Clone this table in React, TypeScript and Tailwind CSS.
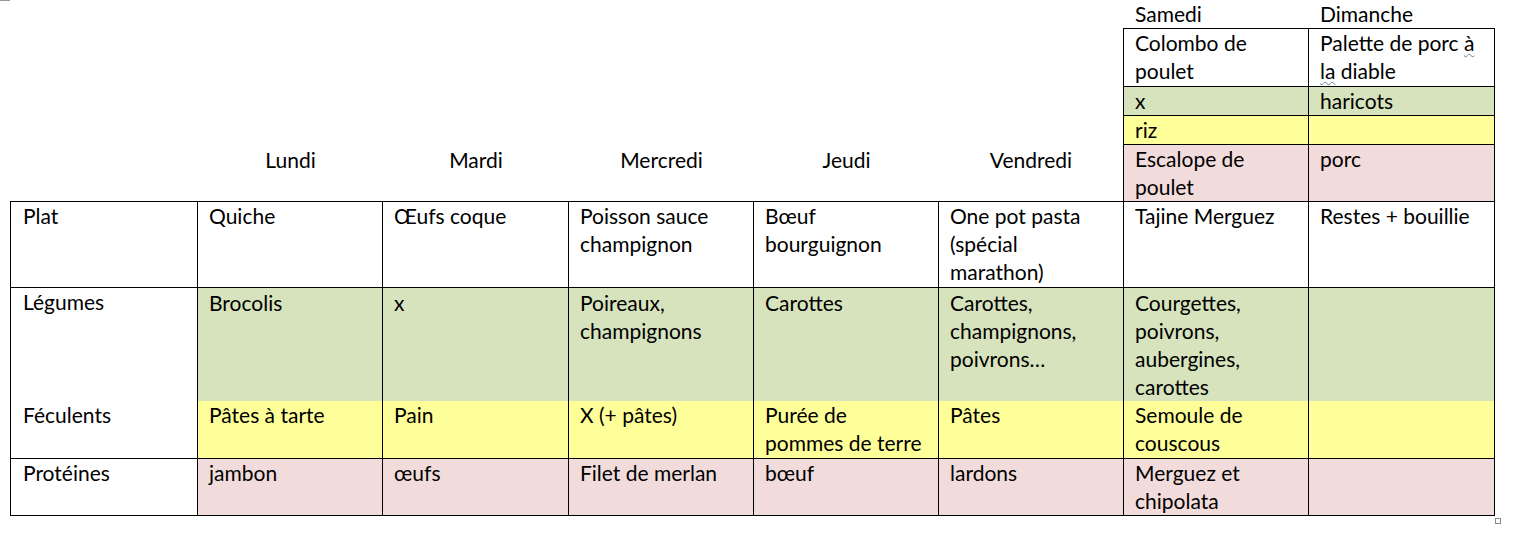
import React from "react";

type Tone = "white" | "green" | "yellow" | "pink";

const bg: Record<Tone, string> = {
  white: "bg-white",
  green: "bg-[#d6e3bc]",
  yellow: "bg-[#ffff99]",
  pink: "bg-[#f2dbdb]",
};

const days = ["Lundi", "Mardi", "Mercredi", "Jeudi", "Vendredi"];

// each cell is a list of lines, wrapped as in the original document
const rows: { label: string; tone: Tone; height: string; cells: string[][] }[] = [
  {
    label: "Plat",
    tone: "white",
    height: "h-[86px]",
    cells: [
      ["Quiche"],
      ["Œufs coque"],
      ["Poisson sauce", "champignon"],
      ["Bœuf", "bourguignon"],
      ["One pot pasta", "(spécial", "marathon)"],
      ["Tajine Merguez"],
      ["Restes + bouillie"],
    ],
  },
  {
    label: "Légumes",
    tone: "green",
    height: "h-[113px]",
    cells: [
      ["Brocolis"],
      ["x"],
      ["Poireaux,", "champignons"],
      ["Carottes"],
      ["Carottes,", "champignons,", "poivrons…"],
      ["Courgettes,", "poivrons,", "aubergines,", "carottes"],
      [],
    ],
  },
  {
    label: "Féculents",
    tone: "yellow",
    height: "h-[58px]",
    cells: [
      ["Pâtes à tarte"],
      ["Pain"],
      ["X (+ pâtes)"],
      ["Purée de", "pommes de terre"],
      ["Pâtes"],
      ["Semoule de", "couscous"],
      [],
    ],
  },
  {
    label: "Protéines",
    tone: "pink",
    height: "h-[57px]",
    cells: [
      ["jambon"],
      ["œufs"],
      ["Filet de merlan"],
      ["bœuf"],
      ["lardons"],
      ["Merguez et", "chipolata"],
      [],
    ],
  },
];

const squiggle = "underline decoration-wavy decoration-[#6b7c99] decoration-1 underline-offset-[2px]";

const weekend: { tone: Tone; height: string; sat: React.ReactNode[]; sun: React.ReactNode[] }[] = [
  {
    tone: "white",
    height: "h-[58px]",
    sat: ["Colombo de", "poulet"],
    sun: [
      <>
        Palette de porc <span className={squiggle}>à</span>
      </>,
      <>
        <span className={squiggle}>la</span> diable
      </>,
    ],
  },
  { tone: "green", height: "h-[29px]", sat: ["x"], sun: ["haricots"] },
  { tone: "yellow", height: "h-[29px]", sat: ["riz"], sun: [] },
  { tone: "pink", height: "h-[56px]", sat: ["Escalope de", "poulet"], sun: ["porc"] },
];

const mainCols = "grid-cols-[187px_185px_186px_185px_185px_185px_185px_186px]";

function Lines({ lines }: { lines: React.ReactNode[] }) {
  return (
    <>
      {lines.map((l, i) => (
        <div key={i} className="whitespace-nowrap">
          {l}
        </div>
      ))}
    </>
  );
}

export default function App() {
  return (
    <div
      className="relative h-[547px] w-[1519px] overflow-hidden bg-white text-[21px] leading-[28px] text-black"
      style={{ fontFamily: "Lato, 'Open Sans', sans-serif" }}
    >
      <div className="absolute left-0 top-0 h-px w-[10px] bg-[#9a9a9a]" />

      <div className="ml-[10px] w-[1485px]">
        {/* header: weekday labels and the weekend table */}
        <div className="flex">
          <div className="grid h-[201px] w-[1113px] grid-cols-[188px_185px_186px_185px_185px_184px] items-end pb-[27px]">
            <div />
            {days.map((d) => (
              <div key={d} className="text-center">
                {d}
              </div>
            ))}
          </div>

          <div className="w-[372px]">
            <div className="grid h-[28px] grid-cols-[186px_186px]">
              <div className="pl-[12px]">Samedi</div>
              <div className="pl-[11px]">Dimanche</div>
            </div>
            <div className="border-l border-t border-black">
              {weekend.map((r, i) => (
                <div key={i} className={`grid grid-cols-[185px_186px] ${r.height}`}>
                  <div className={`${bg[r.tone]} border-r border-black pl-[11px] ${i < weekend.length - 1 ? "border-b" : ""}`}>
                    <Lines lines={r.sat} />
                  </div>
                  <div className={`${bg[r.tone]} border-r border-black pl-[11px] ${i < weekend.length - 1 ? "border-b" : ""}`}>
                    <Lines lines={r.sun} />
                  </div>
                </div>
              ))}
            </div>
          </div>
        </div>

        {/* main table */}
        <div className="border-l border-t border-black">
          {rows.map((r) => (
            <div key={r.label} className={`grid ${mainCols} ${r.height}`}>
              <div className="border-b border-r border-black bg-white pl-[12px]">{r.label}</div>
              {r.cells.map((c, j) => (
                <div
                  key={j}
                  className={`border-b border-r border-black pl-[11px] ${bg[r.tone]} ${r.label === "Légumes" ? "pt-px" : ""}`}
                >
                  <Lines lines={c} />
                </div>
              ))}
            </div>
          ))}
        </div>
        <div className="flex justify-end">
          <div className="-mr-[6px] mt-[2px] h-[6px] w-[6px] border border-[#8a8a8a]" />
        </div>
      </div>
    </div>
  );
}
